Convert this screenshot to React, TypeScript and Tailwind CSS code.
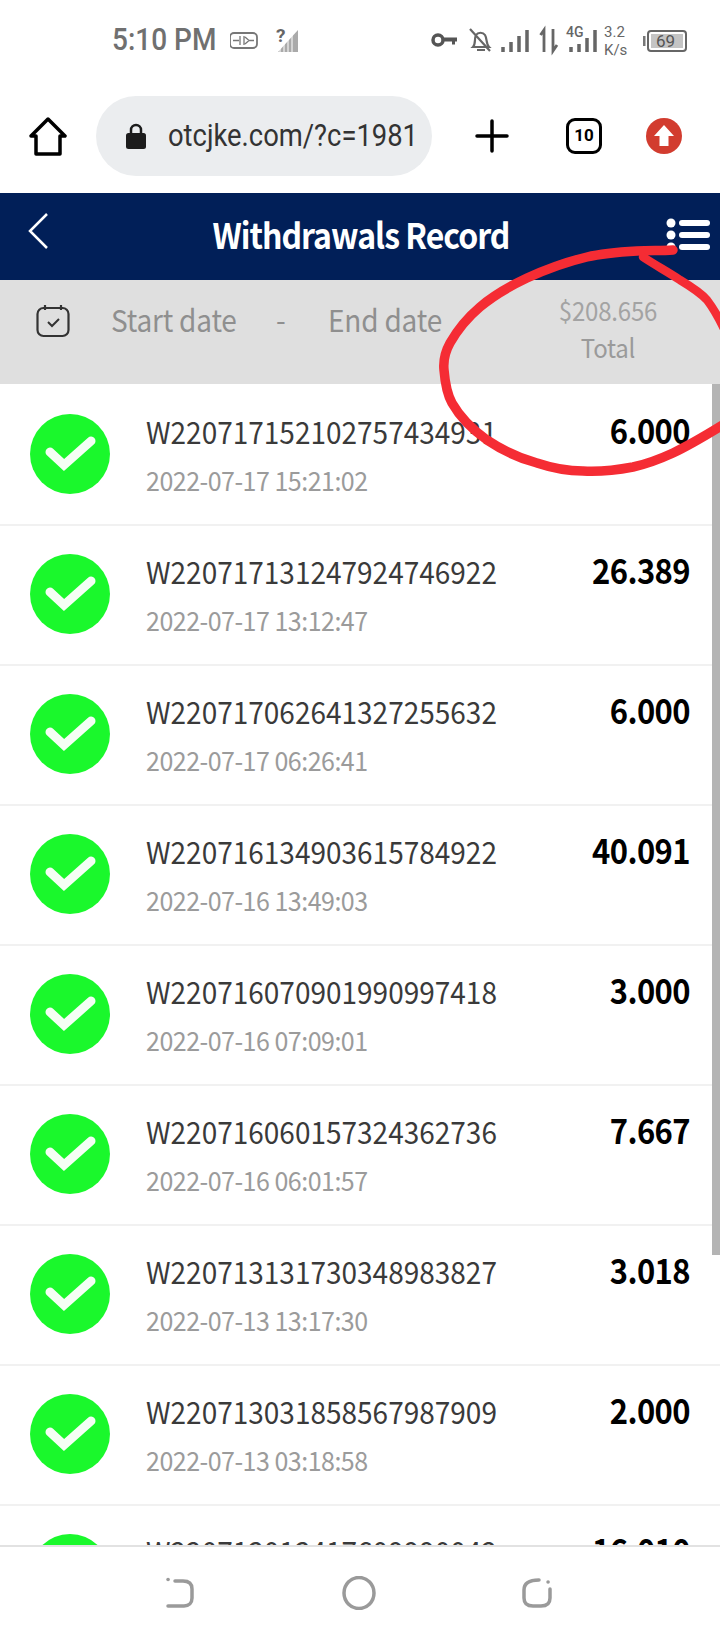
const font = { fontFamily: '"Noto Sans CJK SC", "Noto Sans", sans-serif' };

const rows = [
  ["W220717152102757434931", "2022-07-17 15:21:02", "6.000"],
  ["W220717131247924746922", "2022-07-17 13:12:47", "26.389"],
  ["W220717062641327255632", "2022-07-17 06:26:41", "6.000"],
  ["W220716134903615784922", "2022-07-16 13:49:03", "40.091"],
  ["W220716070901990997418", "2022-07-16 07:09:01", "3.000"],
  ["W220716060157324362736", "2022-07-16 06:01:57", "7.667"],
  ["W220713131730348983827", "2022-07-13 13:17:30", "3.018"],
  ["W220713031858567987909", "2022-07-13 03:18:58", "2.000"],
  ["W220713013417609990042", "2022-07-13 01:34:17", "16.010"],
];

function Check() {
  return (
    <svg width="80" height="80" viewBox="0 0 80 80" className="shrink-0">
      <circle cx="40" cy="40" r="40" fill="#1af82c" />
      <path d="M20 38 L34 51 L61 27" fill="none" stroke="#f4fff4" strokeWidth="9" strokeLinecap="round" strokeLinejoin="miter" />
    </svg>
  );
}

function StatusBar() {
  return (
    <div className="h-[96px] flex items-start text-[#707070]" style={{ fontFamily: 'Roboto, sans-serif' }}>
      <div className="w-[112px] shrink-0" />
      <div className="mt-[22px] text-[28px] leading-[36px] font-medium w-[118px] shrink-0 scale-y-[1.12] whitespace-nowrap">5:10 PM</div>
      <svg width="490" height="60" viewBox="230 0 490 60" className="shrink-0" fill="none">
        <rect x="230" y="33" width="27" height="15" rx="4" stroke="#777" strokeWidth="1.8" />
        <path d="M233 40.500h6M248 40.500h6M240 36v9M244 36v9M245 37l4 3.500-4 3.500" stroke="#777" strokeWidth="1.300" />
        <text x="276" y="42" fontSize="19" fontWeight="700" fill="#666" fontFamily="Roboto, sans-serif">?</text>
        <path d="M278 52 L298 30 V52 Z" fill="#aaaaaa" />
        <path d="M280 52V48M284 52V43M288 52V39M292 52V35" stroke="#fff" strokeWidth="1" />
        <circle cx="438" cy="40" r="5" stroke="#555" strokeWidth="3.500" />
        <path d="M444 37.500h13v4h-2v3h-3v-3h-8z" fill="#555" />
        <path d="M473 47c3-3 1-8 3-12 2-3 7-3 9 0 2 3 1 9 4 12zM477 50h8M470 29l20 22" stroke="#666" strokeWidth="2.200" />
        <path d="M503 47v5M511 42v10M519 36v16M527 30v22" stroke="#666" strokeWidth="3.500" />
        <path d="M544 52V30l-3.500 5M553 29v22l4-6" stroke="#666" strokeWidth="2.800" />
        <text x="566" y="37" fontSize="14" fontWeight="500" fill="#666" fontFamily="Roboto, sans-serif">4G</text>
        <path d="M571 47v5M579 44v8M587 38v14M595 30v22" stroke="#666" strokeWidth="3.500" />
        <text x="604" y="37" fontSize="15" fill="#666" fontFamily="Roboto, sans-serif">3.2</text>
        <text x="604" y="55" fontSize="15" fill="#666" fontFamily="Roboto, sans-serif">K/s</text>
        <rect x="648" y="31" width="38" height="20" rx="3" stroke="#666" strokeWidth="2" />
        <rect x="643" y="36" width="2.500" height="10" fill="#777" />
        <rect x="651" y="34" width="32" height="14" fill="#c4c4c4" />
        <text x="656" y="47" fontSize="17" fill="#555" fontFamily="Roboto, sans-serif">69</text>
      </svg>
    </div>
  );
}

function BrowserBar() {
  return (
    <div className="h-[97px] flex items-start pb-[17px]">
      <svg width="38" height="40" viewBox="0 0 38 40" className="ml-[29px] mt-[21px] shrink-0" fill="none">
        <path d="M19 2 L36 19 H31 V37 H7 V19 H2 Z" stroke="#000" strokeWidth="3.500" strokeLinejoin="round" />
      </svg>
      <div className="ml-[29px] h-[80px] w-[336px] shrink-0 rounded-[40px] bg-[#ebedef] flex items-center">
        <svg width="20" height="26" viewBox="0 0 20 26" className="ml-[30px] shrink-0">
          <path d="M5 11V7a5 5 0 0 1 10 0v4" fill="none" stroke="#1c1c1c" strokeWidth="2.500" />
          <rect x="0" y="10" width="20" height="16" rx="2.500" fill="#1c1c1c" />
        </svg>
        <div className="ml-[22px] w-[246px] overflow-hidden whitespace-nowrap text-[27.4px] leading-[36px] text-[#333333] scale-y-[1.15]" style={{ fontFamily: 'Roboto, sans-serif' }}>otcjke.com/?c=19817</div>
      </div>
      <svg width="34" height="34" viewBox="0 0 34 34" className="ml-[43px] mt-[23px] shrink-0">
        <path d="M17 2V32M2 17H32" stroke="#000" strokeWidth="3.500" strokeLinecap="round" />
      </svg>
      <div className="ml-[57px] mt-[22px] h-[36px] w-[36px] shrink-0 rounded-[9px] border-[3px] border-black flex items-center justify-center text-[17px] font-bold text-black" style={{ fontFamily: 'Roboto, sans-serif' }}>10</div>
      <svg width="36" height="36" viewBox="0 0 36 36" className="ml-[44px] mt-[22px] shrink-0">
        <circle cx="18" cy="18" r="18" fill="#d23c2f" />
        <path d="M18 7 L28 18 H22.500 V28 H13.500 V18 H8 Z" fill="#fff" />
      </svg>
    </div>
  );
}

function Header() {
  return (
    <div className="h-[87px] bg-[#011f58] flex items-start" style={font}>
      <svg width="24" height="38" viewBox="0 0 24 38" className="ml-[27px] mt-[19px] shrink-0" fill="none">
        <path d="M20 2 L3 19 L20 36" stroke="#fff" strokeWidth="2.500" />
      </svg>
      <div className="ml-[161px] mt-[18px] w-[298px] text-center whitespace-nowrap text-[32px] leading-[46px] font-bold tracking-[-1px] scale-y-[1.1] text-white">Withdrawals Record</div>
      <svg width="44" height="34" viewBox="0 0 44 34" className="ml-[156px] mt-[25px] shrink-0">
        <circle cx="5" cy="5" r="4.500" fill="#fff" /><circle cx="5" cy="17" r="4.500" fill="#fff" /><circle cx="5" cy="29" r="4.500" fill="#fff" />
        <rect x="13" y="2" width="31" height="6" rx="3" fill="#fff" /><rect x="13" y="14" width="31" height="6" rx="3" fill="#fff" /><rect x="13" y="26" width="31" height="6" rx="3" fill="#fff" />
      </svg>
    </div>
  );
}

function FilterBar() {
  return (
    <div className="h-[104px] bg-[#dfdfdf] flex items-start" style={font}>
      <svg width="34" height="34" viewBox="0 0 34 34" className="ml-[36px] mt-[24px] shrink-0" fill="none">
        <rect x="1.500" y="4" width="31" height="28" rx="6" stroke="#333" strokeWidth="2.200" />
        <path d="M9 1v5M25 1v5" stroke="#333" strokeWidth="2.200" />
        <path d="M12 18l4 4 7-7" stroke="#333" strokeWidth="2" />
      </svg>
      <div className="ml-[41px] mt-[19px] w-[165px] shrink-0 text-[28px] leading-[40px] tracking-[-0.2px] text-[#8f8f8f] scale-y-[1.08] whitespace-nowrap">Start date</div>
      <div className="mt-[19px] w-[52px] shrink-0 text-[28px] leading-[40px] text-[#8f8f8f]">-</div>
      <div className="w-[226px] shrink-0 mt-[19px] text-[28px] leading-[40px] tracking-[-0.2px] text-[#8f8f8f] scale-y-[1.08] whitespace-nowrap">End date</div>
      <div className="w-[108px] flex flex-col items-center mt-[15px] text-[#a3a3a3] whitespace-nowrap text-[24px] leading-[34px] tracking-[-0.2px] scale-y-[1.08]">
        <span>$208.656</span>
        <span className="text-[#9a9a9a]">Total</span>
      </div>
    </div>
  );
}

function Row({ id, date, amount }: { id: string; date: string; amount: string }) {
  return (
    <div className="h-[140px] shrink-0 border-t-2 border-[#f1f1f1] first:border-white flex items-start pl-[30px] pr-[30px]" style={font}>
      <div className="mt-[28px]"><Check /></div>
      <div className="ml-[36px] flex-1 min-w-0 mt-[25px]">
        <div className="text-[28px] leading-[40px] tracking-[0px] text-[#3a3a3a] scale-y-[1.08] origin-left whitespace-nowrap">{id}</div>
        <div className="mt-[11px] text-[25px] leading-[34px] tracking-[-0.5px] text-[#9b9b9b] scale-y-[1.05] origin-left whitespace-nowrap">{date}</div>
      </div>
      <div className="mt-[22px] text-[31px] leading-[44px] font-bold tracking-[-0.6px] scale-y-[1.1] text-black">{amount}</div>
    </div>
  );
}

function Scribble() {
  return (
    <svg width="720" height="1640" viewBox="0 0 720 1640" className="absolute left-0 top-0 pointer-events-none" fill="none">
      <path d="M673 250 C660 251 650 250 637 251 C620 252 604 253 587 257 C566 262 547 269 527 278 C508 287 494 295 480 307 C467 318 458 329 450 343 C445 352 443 360 444 370 C445 382 447 394 452 403 C460 417 473 430 487 440 C502 450 518 458 537 463 C552 468 567 471 583 471 C600 472 617 470 633 467 C647 464 660 459 673 453 C690 445 705 436 726 423" stroke="#f52c34" strokeWidth="9.500" strokeLinecap="round" strokeLinejoin="round" />
      <path d="M643 257 C655 265 668 272 680 280 C690 286 700 292 707 300 C714 309 718 316 726 333" stroke="#f52c34" strokeWidth="8.500" strokeLinecap="round" />
    </svg>
  );
}

export default function App() {
  return (
    <div className="relative w-[720px] h-[1640px] bg-white overflow-hidden flex flex-col">
      <StatusBar />
      <BrowserBar />
      <Header />
      <FilterBar />
      <div className="relative flex-1 min-h-0 overflow-hidden flex flex-col">
        {rows.map((r) => <Row key={r[0]} id={r[0]} date={r[1]} amount={r[2]} />)}
        <div className="absolute right-0 top-0 w-[8px] h-[871px] bg-[#b4b4b4]" />
      </div>
      <div className="h-[95px] shrink-0 bg-white border-t-2 border-[#e2e2e2] flex items-start">
        <svg width="30" height="32" viewBox="0 0 30 32" className="ml-[165px] mt-[30px] shrink-0" fill="none" stroke="#9a9a9a" strokeWidth="3.500" strokeLinecap="round">
          <path d="M3 2.500h.1" /><path d="M10 4h8c6 0 9 3 9 8v9c0 5-3 8-8 8H3" />
        </svg>
        <svg width="34" height="34" viewBox="0 0 34 34" className="ml-[147px] mt-[29px] shrink-0" fill="none" stroke="#9a9a9a" strokeWidth="3.500">
          <ellipse cx="17" cy="17" rx="15" ry="15.500" />
        </svg>
        <svg width="32" height="32" viewBox="0 0 32 32" className="ml-[146px] mt-[30px] shrink-0" fill="none" stroke="#9a9a9a" strokeWidth="3.500" strokeLinecap="round">
          <path d="M26 5h.1" /><path d="M17 3c-9 0-15 3-15 10v8c0 6 4 8 9 8h8c6 0 9-3 9-8v-9" />
        </svg>
      </div>
      <Scribble />
    </div>
  );
}
